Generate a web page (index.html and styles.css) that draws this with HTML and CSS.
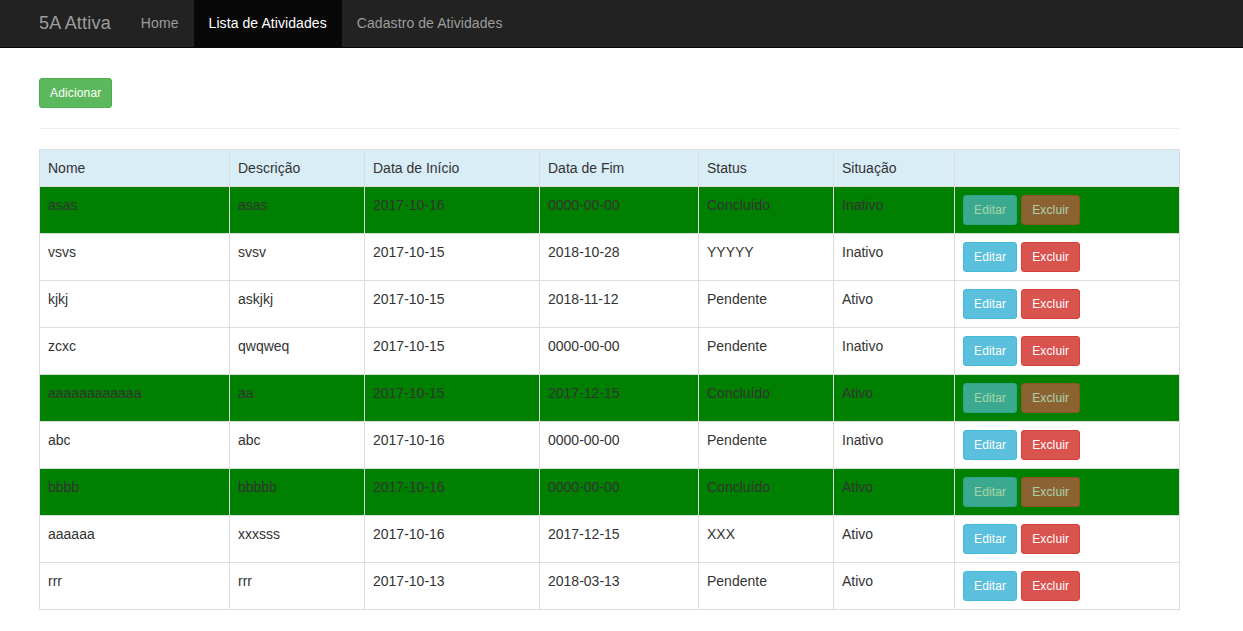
FILE: index.html
```html
<!DOCTYPE html>
<html lang="pt">
<head>
<meta charset="utf-8">
<title>5A Attiva</title>
<link rel="stylesheet" href="styles.css">
</head>
<body>
<nav class="navbar">
  <div class="wrap nav-inner">
    <a class="brand" href="#">5A Attiva</a>
    <ul class="nav">
      <li><a href="#">Home</a></li>
      <li class="active"><a href="#">Lista de Atividades</a></li>
      <li><a href="#">Cadastro de Atividades</a></li>
    </ul>
  </div>
</nav>
<main class="wrap content">
  <div class="toolbar"><button class="btn btn-success">Adicionar</button></div>
  <hr class="sep">
  <table class="grid">
    <colgroup>
      <col style="width:190px"><col style="width:135px"><col style="width:175px"><col style="width:159px"><col style="width:135px"><col style="width:121px"><col style="width:225px">
    </colgroup>
    <thead>
      <tr><th>Nome</th><th>Descrição</th><th>Data de Início</th><th>Data de Fim</th><th>Status</th><th>Situação</th><th></th></tr>
    </thead>
    <tbody>
      <tr class="done"><td>asas</td><td>asas</td><td>2017-10-16</td><td>0000-00-00</td><td>Concluído</td><td>Inativo</td><td><button class="btn btn-info" disabled>Editar</button> <button class="btn btn-danger" disabled>Excluir</button></td></tr>
      <tr><td>vsvs</td><td>svsv</td><td>2017-10-15</td><td>2018-10-28</td><td>YYYYY</td><td>Inativo</td><td><button class="btn btn-info">Editar</button> <button class="btn btn-danger">Excluir</button></td></tr>
      <tr><td>kjkj</td><td>askjkj</td><td>2017-10-15</td><td>2018-11-12</td><td>Pendente</td><td>Ativo</td><td><button class="btn btn-info">Editar</button> <button class="btn btn-danger">Excluir</button></td></tr>
      <tr><td>zcxc</td><td>qwqweq</td><td>2017-10-15</td><td>0000-00-00</td><td>Pendente</td><td>Inativo</td><td><button class="btn btn-info">Editar</button> <button class="btn btn-danger">Excluir</button></td></tr>
      <tr class="done"><td>aaaaaaaaaaaa</td><td>aa</td><td>2017-10-15</td><td>2017-12-15</td><td>Concluído</td><td>Ativo</td><td><button class="btn btn-info" disabled>Editar</button> <button class="btn btn-danger" disabled>Excluir</button></td></tr>
      <tr><td>abc</td><td>abc</td><td>2017-10-16</td><td>0000-00-00</td><td>Pendente</td><td>Inativo</td><td><button class="btn btn-info">Editar</button> <button class="btn btn-danger">Excluir</button></td></tr>
      <tr class="done"><td>bbbb</td><td>bbbbb</td><td>2017-10-16</td><td>0000-00-00</td><td>Concluído</td><td>Ativo</td><td><button class="btn btn-info" disabled>Editar</button> <button class="btn btn-danger" disabled>Excluir</button></td></tr>
      <tr><td>aaaaaa</td><td>xxxsss</td><td>2017-10-16</td><td>2017-12-15</td><td>XXX</td><td>Ativo</td><td><button class="btn btn-info">Editar</button> <button class="btn btn-danger">Excluir</button></td></tr>
      <tr><td>rrr</td><td>rrr</td><td>2017-10-13</td><td>2018-03-13</td><td>Pendente</td><td>Ativo</td><td><button class="btn btn-info">Editar</button> <button class="btn btn-danger">Excluir</button></td></tr>
    </tbody>
  </table>
</main>
</body>
</html>
```
FILE: styles.css
```css
* { box-sizing: border-box; }
html, body { margin: 0; padding: 0; }
body {
  font-family: "Liberation Sans", Arial, Helvetica, sans-serif;
  font-size: 14px;
  line-height: 20px;
  color: #333;
  background: #fff;
}
.wrap {
  width: 1170px;
  margin-left: 24px;
  padding: 0 15px;
}
.navbar {
  background: #222;
  border-bottom: 1px solid #080808;
  height: 48px;
}
.nav-inner {
  display: flex;
  height: 47px;
}
.brand {
  margin-left: -15px;
  padding: 0 15px;
  font-size: 18px;
  line-height: 47px;
  letter-spacing: 0.2px;
  color: #9d9d9d;
  text-decoration: none;
}
.nav {
  display: flex;
  list-style: none;
  margin: 0;
  padding: 0;
}
.nav a {
  display: block;
  padding: 0 15px;
  line-height: 47px;
  letter-spacing: 0.08px;
  color: #9d9d9d;
  text-decoration: none;
}
.nav .active a {
  background: #080808;
  color: #fff;
}
.content { padding-top: 30px; }
.toolbar { display: flex; }
.btn {
  font-family: inherit;
  display: inline-block;
  font-size: 12px;
  line-height: 18px;
  letter-spacing: 0.15px;
  padding: 5px 10px;
  border: 1px solid transparent;
  border-radius: 3px;
  color: #fff;
  cursor: pointer;
  vertical-align: middle;
}
.btn-success { background: #5cb85c; border-color: #4cae4c; }
.btn-info { background: #5bc0de; border-color: #46b8da; }
.btn-danger { background: #d9534f; border-color: #d43f3a; }
.btn[disabled] { opacity: .65; cursor: not-allowed; }
.sep {
  margin: 20px 0;
  border: 0;
  border-top: 1px solid #eee;
  height: 0;
}
.grid {
  width: 1140px;
  table-layout: fixed;
  border-collapse: collapse;
  border: 1px solid #ddd;
  margin-bottom: 20px;
}
.grid th, .grid td {
  border: 1px solid #ddd;
  padding: 8px;
  text-align: left;
  vertical-align: top;
  line-height: 20px;
}
.grid th { font-weight: normal; background: #d9edf7; }
.grid tr.done td { background: #008000; }
```
